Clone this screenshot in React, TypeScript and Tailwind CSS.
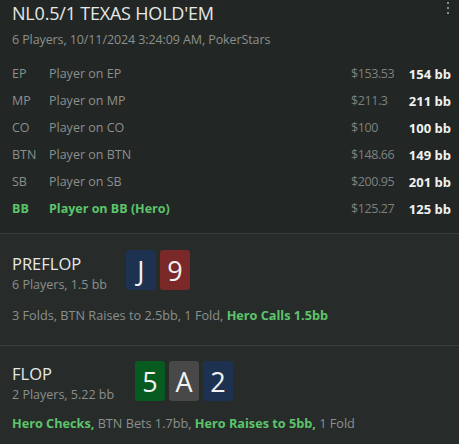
import React from "react";

const players = [
  { pos: "EP", name: "Player on EP", usd: "$153.53", bb: "154 bb" },
  { pos: "MP", name: "Player on MP", usd: "$211.3", bb: "211 bb" },
  { pos: "CO", name: "Player on CO", usd: "$100", bb: "100 bb" },
  { pos: "BTN", name: "Player on BTN", usd: "$148.66", bb: "149 bb" },
  { pos: "SB", name: "Player on SB", usd: "$200.95", bb: "201 bb" },
  { pos: "BB", name: "Player on BB (Hero)", usd: "$125.27", bb: "125 bb", hero: true },
];

function Card({ v, color }: { v: string; color: string }) {
  return (
    <div
      className={`w-[30px] h-[40px] rounded-[3px] flex items-center justify-center text-[27px] leading-none text-[#f2f2f2] ${color}`}
    >
      {v}
    </div>
  );
}

export default function App() {
  return (
    <div
      className="w-[459px] h-[444px] bg-[#272c2b] overflow-hidden"
      style={{ fontFamily: '"Open Sans", "Noto Sans", sans-serif' }}
    >
      <div className="bg-[#222725] pl-3 pr-[8px] pb-[10px] relative">
        <div className="absolute right-[10px] top-[2px] flex flex-col gap-[3px]">
          <div className="w-[2px] h-[2px] bg-[#8a8e8c]" />
          <div className="w-[2px] h-[2px] bg-[#8a8e8c]" />
          <div className="w-[2px] h-[2px] bg-[#8a8e8c]" />
        </div>
        <div className="text-[18px] leading-[24px] pt-[1px] text-[#e6e8e7] tracking-[-0.2px]">
          NL0.5/1 TEXAS HOLD'EM
        </div>
        <div className="text-[12.5px] leading-[18px] mt-[6px] text-[#8b8f8d] tracking-[-0.1px]">
          6 Players, 10/11/2024 3:24:09 AM, PokerStars
        </div>
        <div className="mt-[12px]">
          {players.map((p) => (
            <div key={p.pos} className="flex items-center h-[27px] text-[12.5px] whitespace-nowrap">
              <div
                className={`w-[37px] ${p.hero ? "text-[#5cc46a] font-bold" : "text-[#8b8f8d]"}`}
              >
                {p.pos}
              </div>
              <div className={`flex-1 ${p.hero ? "text-[#5cc46a] font-bold" : "text-[#8b8f8d]"}`}>
                {p.name}
              </div>
              <div className="w-[56px] text-[#7d817f] tracking-[-0.4px]">{p.usd}</div>
              <div className="w-[44px] text-right text-[#f0f2f1] font-bold text-[13px]">{p.bb}</div>
            </div>
          ))}
        </div>
      </div>
      <div className="h-px bg-[#3a3f3d]" />
      <div className="px-3 pt-[16px] pb-[21px]">
        <div className="flex items-start">
          <div className="w-[114px]">
            <div className="text-[16.5px] leading-[24px] text-[#e6e8e7] mt-[2px]">PREFLOP</div>
            <div className="text-[12.5px] leading-[18px] text-[#8b8f8d]">6 Players, 1.5 bb</div>
          </div>
          <div className="flex gap-[4px]">
            <Card v="J" color="bg-[#1d3250]" />
            <Card v="9" color="bg-[#7a2828]" />
          </div>
        </div>
        <div className="text-[12.7px] leading-[18px] mt-[12px] text-[#8b8f8d]">
          3 Folds, BTN Raises to 2.5bb, 1 Fold,{" "}
          <span className="text-[#5cc46a] font-bold">Hero Calls 1.5bb</span>
        </div>
      </div>
      <div className="h-px bg-[#3a3f3d]" />
      <div className="px-3 pt-[15px]">
        <div className="flex items-start">
          <div className="w-[123px]">
            <div className="text-[16.5px] leading-[24px] text-[#e6e8e7] mt-[1px]">FLOP</div>
            <div className="text-[12.5px] leading-[18px] text-[#8b8f8d]">2 Players, 5.22 bb</div>
          </div>
          <div className="flex gap-[4px]">
            <Card v="5" color="bg-[#075a20]" />
            <Card v="A" color="bg-[#484848]" />
            <Card v="2" color="bg-[#1d3250]" />
          </div>
        </div>
        <div className="text-[12.7px] leading-[18px] mt-[10px] text-[#8b8f8d]">
          <span className="text-[#5cc46a] font-bold">Hero Checks,</span> BTN Bets 1.7bb,{" "}
          <span className="text-[#5cc46a] font-bold">Hero Raises to 5bb,</span> 1 Fold
        </div>
      </div>
    </div>
  );
}
